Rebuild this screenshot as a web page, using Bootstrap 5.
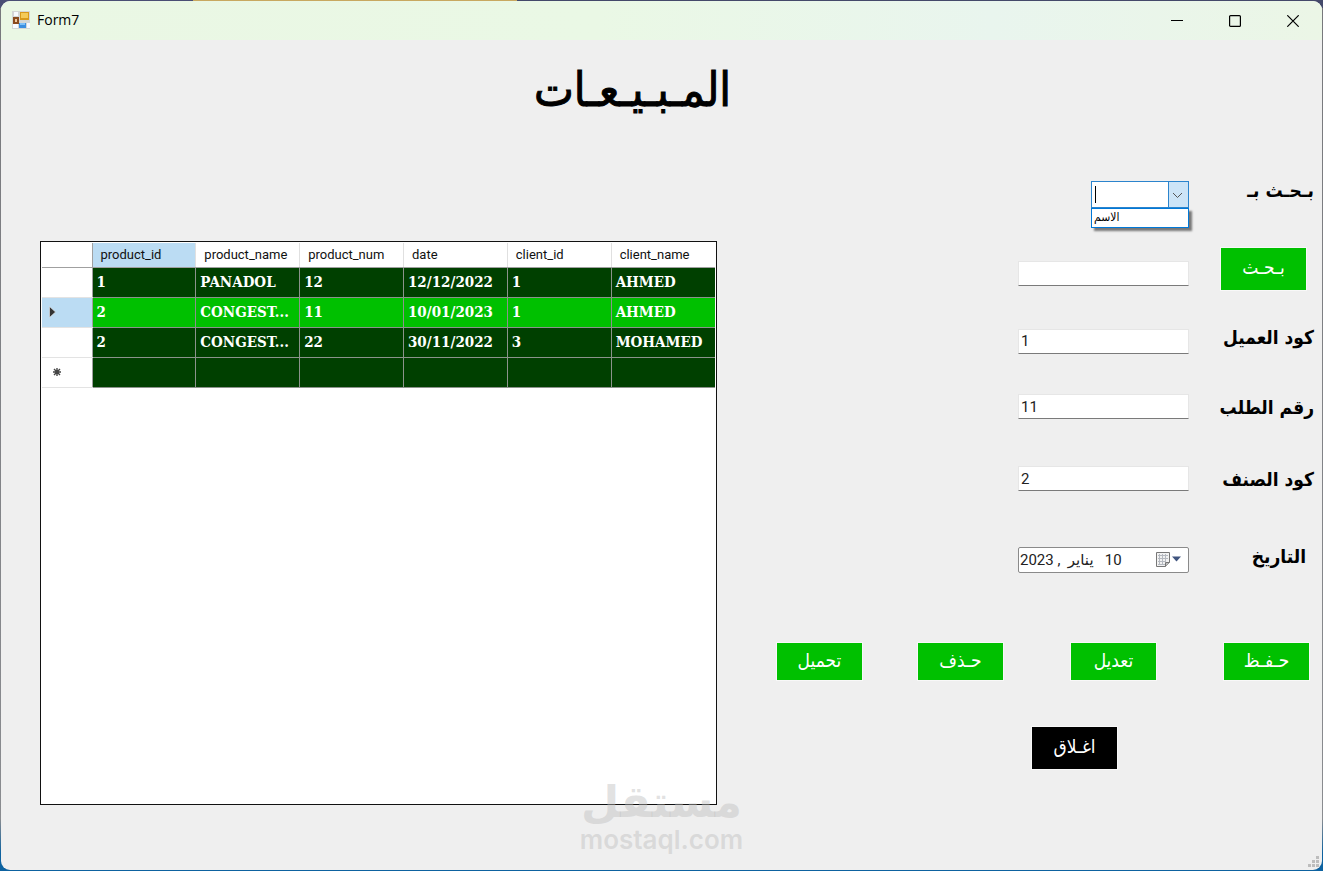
<!DOCTYPE html>
<html lang="ar">
<head>
<meta charset="utf-8">
<meta name="viewport" content="width=device-width, initial-scale=1">
<title>Form7</title>
<link href="https://cdn.jsdelivr.net/npm/bootstrap@5.3.0/dist/css/bootstrap.min.css" rel="stylesheet">
<style>
  body { background: linear-gradient(90deg, #4a4e74 193px, #c8a860 193px 517px, #44496a 517px) top / 100% 8px no-repeat, linear-gradient(#77787c, #8a8c90 94%, #0d62a0 98%); font-family: "DejaVu Sans Condensed", "DejaVu Sans", sans-serif; color: #000; }
  .app-window { min-height: calc(100vh - 2px); margin: 1px; border-radius: 9px; background: #efefef; overflow: hidden; }
  .title-bar { height: 39px; padding-bottom: 2px; background: linear-gradient(90deg, #eaf7e4 0%, #eaf8e5 45%, #e9f5ee 75%, #ebf6e6 100%); font: 14px "Open Sans", sans-serif; }
  .win-btn { width: 58px; height: 36px; border: 0; background: none; padding: 0; }
  .form-title { font-size: 47px; line-height: 60px; font-weight: 400; padding: 20px 58px 61px 0; margin: 0; -webkit-text-stroke: 1px #000; }
  .work-area { padding: 0 8px 65px 39px; gap: 60px; }
  .grid-box { margin-top: 60px; border: 1px solid #111; background: #fff; padding: 1px; }
  .data-grid { table-layout: fixed; width: 100%; border-collapse: collapse; }
  .data-grid th { height: 24px; font: 13px "Roboto", sans-serif; padding: 0 8px; border-right: 1px solid #e0e0e0; border-bottom: 1px solid #a0a0a0; background: #fff; color: #111; }
  .data-grid th.row-head { width: 50px; padding: 0 7px; border-right: 1px solid #a0a0a0; border-bottom: 1px solid #e3e3e3; }
  .data-grid thead th.row-head { border-bottom-color: #a0a0a0; }
  .data-grid th.picked { background: #bbdcf3; }
  .data-grid td { height: 30px; padding: 0 4px; border: 1px solid #8b938b; background: #004000; color: #fff; font: bold 15px "DejaVu Serif Condensed", "DejaVu Serif", serif; white-space: nowrap; }
  .data-grid td:last-child, .data-grid th:last-child { border-right: 0; }
  .data-grid tr.current td { background: #00c000; }
  .form-pane { width: 537px; }
  .field-label { width: 125px; font-size: 19px; font-weight: 700; line-height: 18px; white-space: nowrap; }
  .box { width: 171px; height: 25px; border: 1px solid #e6e6e6; border-bottom-color: #7a7a7a; background: #fff; padding: 0 2px; font: 15px "Roboto", "DejaVu Sans", sans-serif; color: #222; direction: ltr; }
  .combo { width: 98px; height: 27px; }
  .combo select { width: 100%; height: 100%; appearance: none; border: 1px solid #2b84cd; border-radius: 0; background: linear-gradient(90deg, #fff 76px, #2b84cd 76px 77px, #cce4f7 77px); padding: 0; }
  .combo .caret-bar { left: 4px; top: 5px; width: 1px; height: 17px; background: #000; }
  .combo .chevron { right: 6px; top: 11px; }
  .combo ul { left: 0; top: 27px; width: 100%; height: 20px; border: 1px solid #0078d7; background: #fff; box-shadow: 3px 3px 2px #777; padding: 0 2px; font-size: 12px; line-height: 17px; text-align: left; }
  .date-box { height: 26px; border: 1px solid #8a8a8a; border-radius: 2px; direction: rtl; text-align: left; padding: 0 1px; white-space: pre; }
  .date-icons { right: 7px; top: 4px; }
  .push { width: 85px; height: 37px; border: 0; border-radius: 0; padding: 0 0 4px; background: #00c000; color: #fff; font-size: 19px; line-height: 24px; box-shadow: 0 0 0 1px #f8f8f8; }
  .push.tall { height: 42px; }
  .gap-a { margin-top: 40px; }
  .gap-s { margin-top: 38px; }
  .gap-b { margin-top: 47px; }
  .gap-c { margin-top: 56px; }
  .gap-d { margin-top: 70px; }
  .actions { gap: 56px; padding-right: 5px; }
  .spaced { margin-left: 12px; }
  .close-row { padding-right: 197px; }
  .watermark { bottom: 16px; color: rgba(190, 190, 190, .45); font-weight: 700; pointer-events: none; }
  .watermark .mark-ar { font: 700 44px/48px "DejaVu Sans", sans-serif; }
  .watermark .mark-en { font: 600 26px/28px "Inter", sans-serif; }
  .grip { right: 2px; bottom: 2px; }
</style>
</head>
<body>
<div class="app-window position-relative d-flex flex-column">
  <header class="title-bar d-flex align-items-center">
    <svg class="ms-2" width="24" height="20" viewBox="0 0 24 20" aria-hidden="true">
      <rect x="3" y="1" width="18" height="18" fill="#d4d6d6"/><path d="M5 2h4v4H5zM4 14h5v4H4zM18 13h3v5h-3z" fill="#f8faff"/>
      <rect x="11" y="2" width="9" height="8" fill="#d89a1c"/><rect x="12" y="3" width="7" height="5" fill="#f4ca58"/>
      <rect x="4" y="7" width="6" height="7" fill="#8a4a1e"/><rect x="6" y="9" width="2" height="3" fill="#efc8a0"/>
      <rect x="10" y="13" width="7" height="5" fill="#3c8ee0"/><path d="M11 13h5v2h-5z" fill="#7fc0f8"/>
    </svg>
    <span class="ms-1 me-auto" lang="en">Form7</span>
    <button class="win-btn" aria-label="Minimize"><svg width="12" height="12" viewBox="0 0 12 12"><path d="M0 5.5h12" stroke="#000"/></svg></button>
    <button class="win-btn" aria-label="Maximize"><svg width="12" height="12" viewBox="0 0 12 12"><rect x=".6" y=".6" width="10.8" height="10.8" rx="1" fill="none" stroke="#000" stroke-width="1.2"/></svg></button>
    <button class="win-btn" aria-label="Close"><svg width="12" height="12" viewBox="0 0 12 12"><path d="M.3.3l11.4 11.4M11.7.3L.3 11.7" stroke="#000" stroke-width="1.2"/></svg></button>
  </header>

  <h1 class="form-title text-center" dir="rtl">المـبـيـعـات</h1>

  <main class="work-area d-flex flex-grow-1">
    <section class="grid-box flex-grow-1">
      <table class="data-grid" lang="en">
        <thead>
          <tr><th class="row-head"></th><th class="picked">product_id</th><th>product_name</th><th>product_num</th><th>date</th><th>client_id</th><th>client_name</th></tr>
        </thead>
        <tbody>
          <tr><th class="row-head"></th><td>1</td><td>PANADOL</td><td>12</td><td>12/12/2022</td><td>1</td><td>AHMED</td></tr>
          <tr class="current"><th class="row-head picked"><svg class="d-block" width="7" height="12" viewBox="0 0 7 12"><path d="M.5.5v11L6.500 6z" fill="#333" stroke="#eee" stroke-width=".6"/></svg></th><td>2</td><td>CONGEST...</td><td>11</td><td>10/01/2023</td><td>1</td><td>AHMED</td></tr>
          <tr><th class="row-head"></th><td>2</td><td>CONGEST...</td><td>22</td><td>30/11/2022</td><td>3</td><td>MOHAMED</td></tr>
          <tr><th class="row-head"><svg class="d-block ms-1" width="8" height="8" viewBox="0 0 8 8"><path d="M4 0v8M0 4h8M1 1l6 6M7 1L1 7" stroke="#444" stroke-width="1.400"/></svg></th><td></td><td></td><td></td><td></td><td></td><td></td></tr>
        </tbody>
      </table>
    </section>

    <form class="form-pane flex-shrink-0" dir="rtl">
      <div class="d-flex">
        <label class="field-label" for="by">بـحـث بـ</label>
        <div class="combo position-relative">
          <select id="by"><option value=""></option><option>الاسم</option></select>
          <span class="caret-bar position-absolute"></span>
          <svg class="chevron position-absolute" width="11" height="7" viewBox="0 0 11 7"><path d="M1 1l4.500 4.500L10 1" fill="none" stroke="#555"/></svg>
          <ul class="position-absolute list-unstyled m-0"><li>الاسم</li></ul>
        </div>
      </div>
      <div class="d-flex align-items-end gap-a">
        <div class="field-label pe-2"><button type="button" class="push tall d-block">بـحـث</button></div>
        <input class="box mb-1" type="text" aria-label="بحث">
      </div>
      <div class="d-flex align-items-center gap-s"><label class="field-label pb-2" for="client">كود العميل</label><input class="box" id="client" type="text" value="1"></div>
      <div class="d-flex align-items-center gap-a"><label class="field-label" for="order">رقم الطلب</label><input class="box" id="order" type="text" value="11"></div>
      <div class="d-flex align-items-center gap-b"><label class="field-label" for="item">كود الصنف</label><input class="box" id="item" type="text" value="2"></div>
      <div class="d-flex align-items-center gap-c">
        <label class="field-label pe-2 pb-2" for="day">التاريخ</label>
        <div class="position-relative d-flex">
          <input class="box date-box" id="day" type="text" value="10   يناير  , 2023">
          <svg class="date-icons position-absolute" width="27" height="17" viewBox="0 0 27 17"><path d="M1.500 1.500h13v10l-4 4h-9z" fill="#f2f2f2" stroke="#777"/><path d="M10.500 15.500v-4h4" fill="#bbb" stroke="#777"/><path d="M3 4.500h10M3 7.500h10M3 10.500h8M3 13.500h7M4.500 3v11M7.500 3v11M10.500 3v8" stroke="#b5b9c0"/><path d="M17 5.500h9l-4.500 5z" fill="#40557f"/></svg>
        </div>
      </div>
      <div class="actions d-flex gap-d">
        <button type="button" class="push spaced">حـفـظ</button>
        <button type="button" class="push spaced">تعديل</button>
        <button type="button" class="push">حـذف</button>
        <button type="button" class="push">تحميل</button>
      </div>
      <div class="close-row gap-b"><button type="button" class="push tall bg-black">اغـلاق</button></div>
    </form>
  </main>

  <div class="watermark position-absolute start-50 translate-middle-x text-center">
    <div class="mark-ar" dir="rtl">مستقل</div>
    <div class="mark-en" lang="en">mostaql.com</div>
  </div>
  <svg class="grip position-absolute" width="12" height="12" viewBox="0 0 12 12"><path d="M8 0h3v3H8zM4 4h3v3H4zM8 4h3v3H8zM0 8h3v3H0zM4 8h3v3H4zM8 8h3v3H8z" fill="#bdbdbd"/></svg>
</div>
<script src="https://cdn.jsdelivr.net/npm/bootstrap@5.3.0/dist/js/bootstrap.bundle.min.js"></script>
</body>
</html>
